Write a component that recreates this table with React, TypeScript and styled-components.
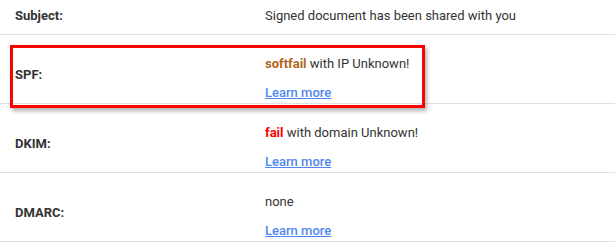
import React from "react";
import styled, { createGlobalStyle } from "styled-components";

const Global = createGlobalStyle`
  html, body { margin: 0; padding: 0; background: #ffffff; }
  body { font-family: Roboto, "Noto Sans", Arial, sans-serif; }
`;

const Card = styled.div`
  position: relative;
  background: #ffffff;
  box-shadow: 0 2px 4px rgba(0, 0, 0, 0.26);
`;

const Row = styled.div<{ $compact?: boolean }>`
  display: grid;
  grid-template-columns: 250px 1fr;
  box-sizing: border-box;
  height: ${(p) => (p.$compact ? 35 : 69)}px;
  border-bottom: 1px solid #e0e0e0;
  &:last-child {
    border-bottom-color: #bdbdbd;
  }
`;

const Label = styled.div<{ $compact?: boolean }>`
  padding: ${(p) => (p.$compact ? 6 : 30)}px 0 0 15px;
  font-size: 13px;
  line-height: 20px;
  font-weight: 700;
  color: #333333;
`;

const Value = styled.div<{ $compact?: boolean }>`
  display: flex;
  flex-direction: column;
  align-items: flex-start;
  gap: 9px;
  padding: ${(p) => (p.$compact ? 6 : 19)}px 0 0 15px;
  font-size: 13px;
  line-height: 20px;
  color: #333333;
`;

const Line = styled.div``;

const Status = styled.span<{ $tone: "soft" | "fail" }>`
  font-weight: 700;
  color: ${(p) => (p.$tone === "soft" ? "#b0651e" : "#ff0000")};
`;

const Link = styled.a`
  color: #5187f0;
  font-weight: 500;
  text-decoration: underline;
  cursor: pointer;
`;

const Highlight = styled.div`
  position: absolute;
  left: 10px;
  top: 45px;
  width: 415px;
  height: 63px;
  box-sizing: border-box;
  border: 3px solid #ff0000;
  box-shadow: 2px 3px 4px rgba(0, 0, 0, 0.3);
  pointer-events: none;
`;

type Check = {
  label: string;
  status?: { text: string; tone: "soft" | "fail" };
  rest: string;
};

const checks: Check[] = [
  { label: "SPF:", status: { text: "softfail", tone: "soft" }, rest: " with IP Unknown!" },
  { label: "DKIM:", status: { text: "fail", tone: "fail" }, rest: " with domain Unknown!" },
  { label: "DMARC:", rest: "none" },
];

export default function App() {
  return (
    <>
      <Global />
      <Card>
        <Row $compact>
          <Label $compact>Subject:</Label>
          <Value $compact>
            <Line>Signed document has been shared with you</Line>
          </Value>
        </Row>
        {checks.map((c) => (
          <Row key={c.label}>
            <Label>{c.label}</Label>
            <Value>
              <Line>
                {c.status && <Status $tone={c.status.tone}>{c.status.text}</Status>}
                {c.rest}
              </Line>
              <Link>Learn more</Link>
            </Value>
          </Row>
        ))}
        <Highlight />
      </Card>
    </>
  );
}
